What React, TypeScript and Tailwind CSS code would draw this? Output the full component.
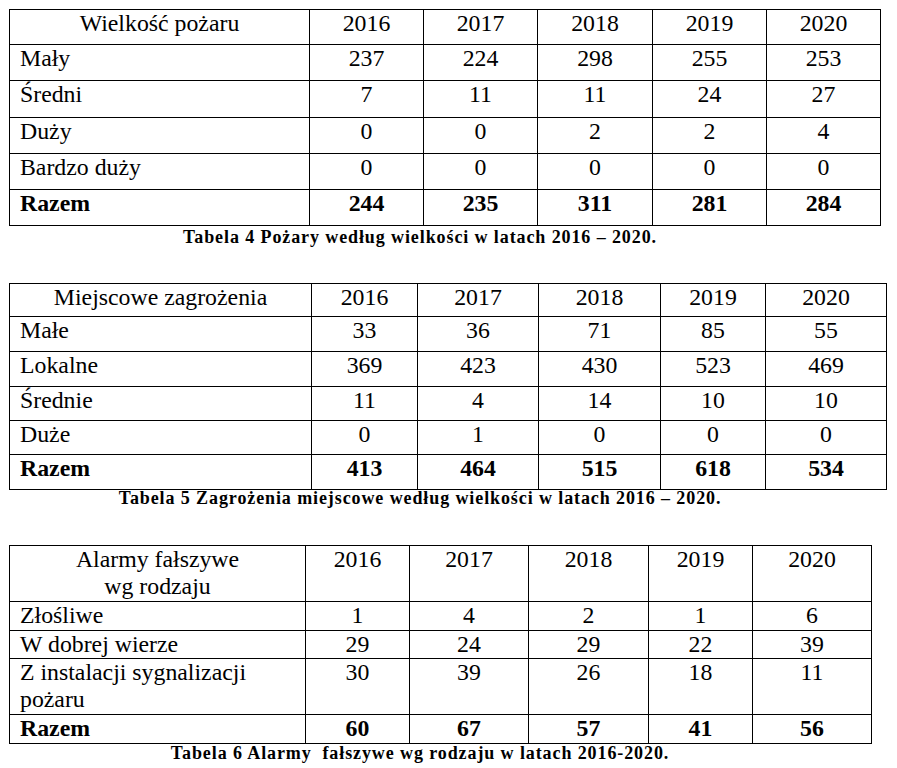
import React from 'react'

type Row = { label: React.ReactNode; values: (string | number)[]; bold?: boolean; h: string }

function DataTable({
  title,
  cols,
  width,
  headH,
  rows,
}: {
  title: React.ReactNode
  cols: string[]
  width: string
  headH: string
  rows: Row[]
}) {
  const years = [2016, 2017, 2018, 2019, 2020]
  return (
    <table
      className={`border-collapse table-fixed text-black font-['Liberation_Serif','Times_New_Roman',serif] font-normal text-[23.8px] leading-[27px] ${width}`}
    >
      <colgroup>
        {cols.map((c, i) => (
          <col key={i} className={c} />
        ))}
      </colgroup>
      <tbody>
        <tr className={headH}>
          <td className="border border-black align-top text-center p-0">{title}</td>
          {years.map((y) => (
            <td key={y} className="border border-black align-top text-center p-0">
              {y}
            </td>
          ))}
        </tr>
        {rows.map((r, i) => (
          <tr key={i} className={r.h}>
            <td className={`border border-black align-top pl-[10px] pr-1 py-0 ${r.bold ? 'font-bold' : ''}`}>
              {r.label}
            </td>
            {r.values.map((v, j) => (
              <td
                key={j}
                className={`border border-black align-top text-center p-0 ${r.bold ? 'font-bold' : ''}`}
              >
                {v}
              </td>
            ))}
          </tr>
        ))}
      </tbody>
    </table>
  )
}

function Caption({ children, className }: { children: React.ReactNode; className: string }) {
  return (
    <div
      className={`w-[822px] text-center font-['Liberation_Serif','Times_New_Roman',serif] font-bold text-[18px] leading-[20px] tracking-[0.9px] text-black ${className}`}
    >
      {children}
    </div>
  )
}

export default function App() {
  return (
    <div className="bg-white w-[897px] h-[768px] pl-[9px] pt-[9px] overflow-hidden font-['Liberation_Serif',serif]">
      <DataTable
        title="Wielkość pożaru"
        width="w-[871px]"
        cols={['w-[300px]', 'w-[114px]', 'w-[114px]', 'w-[115px]', 'w-[114px]', 'w-[114px]']}
        headH="h-[35px]"
        rows={[
          { label: 'Mały', values: [237, 224, 298, 255, 253], h: 'h-[36px]' },
          { label: 'Średni', values: [7, 11, 11, 24, 27], h: 'h-[37px]' },
          { label: 'Duży', values: [0, 0, 2, 2, 4], h: 'h-[36px]' },
          { label: 'Bardzo duży', values: [0, 0, 0, 0, 0], h: 'h-[36px]' },
          { label: 'Razem', values: [244, 235, 311, 281, 284], bold: true, h: 'h-[36px]' },
        ]}
      />
      <Caption className="mt-[1px]">Tabela 4 Pożary według wielkości w latach 2016 – 2020.</Caption>

      <div className="mt-[36px]">
        <DataTable
          title="Miejscowe zagrożenia"
          width="w-[877px]"
          cols={['w-[302px]', 'w-[106px]', 'w-[121px]', 'w-[122px]', 'w-[105px]', 'w-[121px]']}
          headH="h-[33px]"
          rows={[
            { label: 'Małe', values: [33, 36, 71, 85, 55], h: 'h-[35px]' },
            { label: 'Lokalne', values: [369, 423, 430, 523, 469], h: 'h-[35px]' },
            { label: 'Średnie', values: [11, 4, 14, 10, 10], h: 'h-[34px]' },
            { label: 'Duże', values: [0, 1, 0, 0, 0], h: 'h-[34px]' },
            { label: 'Razem', values: [413, 464, 515, 618, 534], bold: true, h: 'h-[35px]' },
          ]}
        />
      </div>
      <Caption className="mt-[-2px]">Tabela 5 Zagrożenia miejscowe według wielkości w latach 2016 – 2020.</Caption>

      <div className="mt-[37px]">
        <DataTable
          title={
            <>
              Alarmy fałszywe
              <br />
              wg rodzaju
            </>
          }
          width="w-[862px]"
          cols={['w-[296px]', 'w-[104px]', 'w-[119px]', 'w-[120px]', 'w-[104px]', 'w-[119px]']}
          headH="h-[56px]"
          rows={[
            { label: 'Złośliwe', values: [1, 4, 2, 1, 6], h: 'h-[29px]' },
            { label: 'W dobrej wierze', values: [29, 24, 29, 22, 39], h: 'h-[28px]' },
            {
              label: (
                <>
                  Z instalacji sygnalizacji
                  <br />
                  pożaru
                </>
              ),
              values: [30, 39, 26, 18, 11],
              h: 'h-[56px]',
            },
            { label: 'Razem', values: [60, 67, 57, 41, 56], bold: true, h: 'h-[29px]' },
          ]}
        />
      </div>
      <Caption className="mt-[-1px]">Tabela 6 Alarmy{'\u00a0'} fałszywe wg rodzaju w latach 2016-2020.</Caption>
    </div>
  )
}
